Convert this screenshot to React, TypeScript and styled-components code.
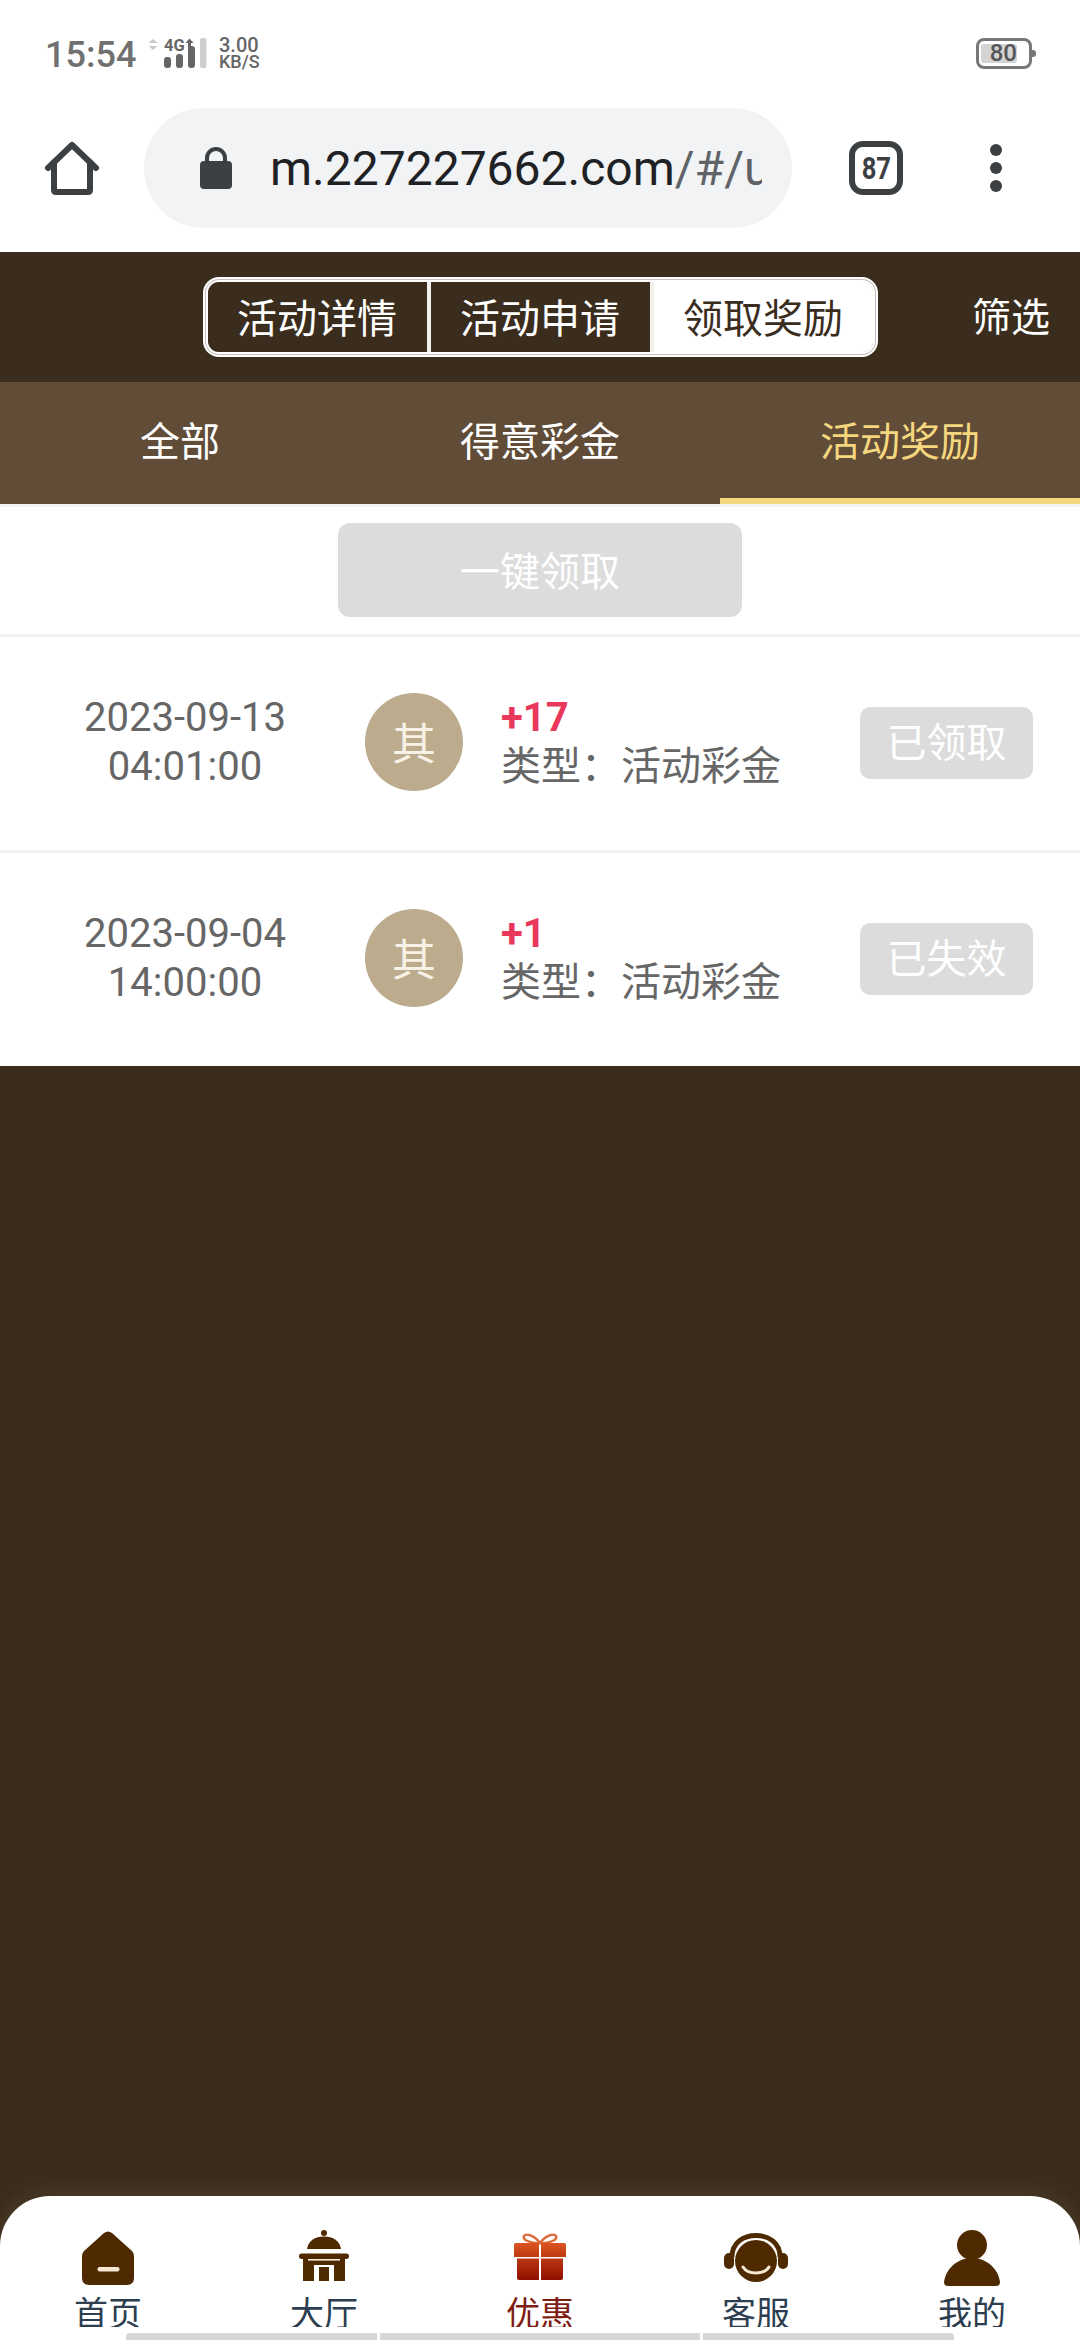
import styled, { createGlobalStyle } from "styled-components";

const GlobalStyle = createGlobalStyle`
  html, body {
    margin: 0;
    padding: 0;
    background: #3b2d1e;
  }
  * {
    box-sizing: border-box;
  }
`;

const records = [
  { date: "2023-09-13", time: "04:01:00", amount: "+17", status: "已领取" },
  { date: "2023-09-04", time: "14:00:00", amount: "+1", status: "已失效" },
];

function HomeIcon() {
  return (
    <svg width="56" height="56" viewBox="0 0 56 56">
      <path
        d="M4 28 L28 5 L52 28 M10 22 V50 Q10 52 12 52 H44 Q46 52 46 50 V22"
        fill="none"
        stroke="#3c4043"
        strokeWidth="6"
        strokeLinecap="round"
        strokeLinejoin="round"
      />
    </svg>
  );
}

function LockIcon() {
  return (
    <svg width="32" height="42" viewBox="0 0 32 42">
      <path
        d="M7 15 V11 A9 9 0 0 1 25 11 V15"
        fill="none"
        stroke="#3c4043"
        strokeWidth="4"
      />
      <rect x="0" y="14" width="32" height="28" rx="4" fill="#3c4043" />
    </svg>
  );
}

function SignalIcon() {
  return (
    <svg width="60" height="31" viewBox="0 0 60 31">
      <path d="M5 1 L9.5 5 H.5 Z M.5 8 H9.5 L5 12 Z" fill="#c9c9c9" />
      <text x="16" y="13" fontFamily="Roboto, sans-serif" fontWeight="700" fontSize="16.5" fill="#666">
        4G
      </text>
      <path d="M41.5 .5 L45.5 5 H43 V10 H40 V5 H37.5 Z" fill="#666" />
      <rect x="16" y="19" width="7" height="11" rx="3" fill="#666" />
      <rect x="28" y="16" width="7" height="14" rx="3" fill="#666" />
      <rect x="40" y="8" width="7" height="22" rx="3" fill="#666" />
      <rect x="52" y="0" width="6.5" height="30" rx="2" fill="#cfcfcf" />
    </svg>
  );
}

function NavHome() {
  return (
    <svg width="52" height="54" viewBox="0 0 52 54">
      <path
        d="M22 2 Q26 -1 30 2 L50 20 Q52 22 52 25 V47 Q52 54 45 54 H7 Q0 54 0 47 V25 Q0 22 2 20 Z"
        fill="#4f2a00"
      />
      <rect x="15.5" y="36" width="22" height="4.5" rx="2" fill="#f7e8d3" />
    </svg>
  );
}

function NavHall() {
  return (
    <svg width="50" height="58" viewBox="0 0 50 58">
      <circle cx="25" cy="4" r="3" fill="#4f2a00" />
      <path d="M8 20 C9 12 16 7.5 25 7.5 C34 7.5 41 12 42 20 Z" fill="#4f2a00" />
      <rect x="0" y="24.5" width="50" height="5.5" rx="2.7" fill="#4f2a00" />
      <path d="M4 28 H46 V52 H35 V36 H15 V52 H4 Z" fill="#4f2a00" />
      <rect x="9" y="30" width="32" height="1.6" fill="#f7e8d3" />
      <rect x="20" y="38" width="10" height="14" fill="#4f2a00" />
    </svg>
  );
}

function NavGift() {
  return (
    <svg width="52" height="51" viewBox="0 0 52 51">
      <defs>
        <linearGradient id="giftFill" x1="0" y1="0" x2="0" y2="1">
          <stop offset="0" stopColor="#dc5420" />
          <stop offset="1" stopColor="#8e0f00" />
        </linearGradient>
      </defs>
      <path
        d="M26 10 C20 2 12 0 10 3 C8 7 16 10 26 10 C36 10 44 7 42 3 C40 0 32 2 26 10 Z"
        fill="none"
        stroke="#da6a3c"
        strokeWidth="2.4"
      />
      <path
        d="M2 10 H25 V24 H0 V12 Q0 10 2 10 Z M27 10 H50 Q52 10 52 12 V24 H27 Z M3 25.5 H25 V47 H5 Q3 47 3 45 Z M27 25.5 H49 V45 Q49 47 47 47 H27 Z"
        fill="url(#giftFill)"
      />
    </svg>
  );
}

function NavService() {
  return (
    <svg width="64" height="50" viewBox="0 0 64 50">
      <circle cx="32" cy="28" r="21" fill="#4f2a00" />
      <path
        d="M8 24 C8 9 20 2.5 32 2.5 C44 2.5 56 9 56 24"
        fill="none"
        stroke="#4f2a00"
        strokeWidth="5"
      />
      <rect x="0" y="20" width="10" height="16" rx="5" fill="#4f2a00" />
      <rect x="54" y="20" width="10" height="16" rx="5" fill="#4f2a00" />
      <path
        d="M19 34 C24 42 40 42 45 34"
        fill="none"
        stroke="#f7e8d3"
        strokeWidth="3"
        strokeLinecap="round"
      />
    </svg>
  );
}

function NavUser() {
  return (
    <svg width="56" height="56" viewBox="0 0 56 56">
      <circle cx="28" cy="15" r="15" fill="#4f2a00" />
      <path
        d="M28 28 C42 28 54 38 56 52 Q56 56 52 56 H4 Q0 56 0 52 C2 38 14 28 28 28 Z"
        fill="#4f2a00"
      />
    </svg>
  );
}

const navItems = [
  { label: "首页", icon: <NavHome /> },
  { label: "大厅", icon: <NavHall /> },
  { label: "优惠", icon: <NavGift />, active: true },
  { label: "客服", icon: <NavService /> },
  { label: "我的", icon: <NavUser /> },
];

export default function App() {
  return (
    <>
      <GlobalStyle />
      <Page>
        <StatusBar>
          <StatusLeft>
            <Clock>15:54</Clock>
            <SignalIcon />
            <Speed>
              <span>3.00</span>
              <small>KB/S</small>
            </Speed>
          </StatusLeft>
          <Battery>
            <BatteryFill>80</BatteryFill>
          </Battery>
        </StatusBar>

        <Toolbar>
          <HomeIcon />
          <UrlPill>
            <LockIcon />
            <UrlText>
              m.227227662.com<span>/#/user</span>
            </UrlText>
          </UrlPill>
          <TabCount>
            <span>87</span>
          </TabCount>
          <MenuDots>
            <i />
            <i />
            <i />
          </MenuDots>
        </Toolbar>

        <Header>
          <SegmentOuter>
            <SegmentInner>
              <Segment>活动详情</Segment>
              <Segment>活动申请</Segment>
              <Segment $active>领取奖励</Segment>
            </SegmentInner>
          </SegmentOuter>
          <Filter>筛选</Filter>
        </Header>

        <SubTabs>
          <SubTab>全部</SubTab>
          <SubTab>得意彩金</SubTab>
          <SubTab $active>活动奖励</SubTab>
        </SubTabs>

        <ActionBar>
          <ClaimAll>一键领取</ClaimAll>
        </ActionBar>

        {records.map((r) => (
          <Row key={r.date}>
            <DateCol>
              <div>{r.date}</div>
              <div>{r.time}</div>
            </DateCol>
            <Avatar>其</Avatar>
            <Info>
              <Amount>{r.amount}</Amount>
              <TypeLine>类型：活动彩金</TypeLine>
            </Info>
            <StatusBadge>{r.status}</StatusBadge>
          </Row>
        ))}

        <Filler />

        <BottomNav>
          <NavRow>
            {navItems.map((item) => (
              <NavItem key={item.label}>
                <NavIcon>{item.icon}</NavIcon>
                <NavLabel $active={item.active}>{item.label}</NavLabel>
              </NavItem>
            ))}
          </NavRow>
          <ScrollStrip>
            <ScrollPiece $w={251} $first />
            <ScrollPiece $w={320} />
            <ScrollPiece $w={251} $last />
          </ScrollStrip>
        </BottomNav>
      </Page>
    </>
  );
}

const Page = styled.div`
  width: 1080px;
  height: 2340px;
  display: flex;
  flex-direction: column;
  overflow: hidden;
  background: #3b2d1e;
  font-family: Roboto, "Noto Sans CJK SC", sans-serif;
`;

const StatusBar = styled.div`
  height: 108px;
  padding: 0 45px;
  background: #fff;
  display: flex;
  align-items: flex-start;
  justify-content: space-between;
`;

const StatusLeft = styled.div`
  display: flex;
  align-items: flex-start;
  padding-top: 38px;
`;

const Clock = styled.span`
  width: 103px;
  margin-top: -3px;
  font-size: 36px;
  line-height: 40px;
  font-weight: 500;
  color: #707070;
`;

const Speed = styled.div`
  margin-left: 11px;
  margin-top: -1px;
  display: flex;
  flex-direction: column;
  color: #666;
  font-weight: 500;
  font-size: 20px;
  line-height: 17px;

  small {
    font-size: 18px;
    line-height: 16px;
  }
`;

const Battery = styled.div`
  position: relative;
  width: 56px;
  height: 31px;
  margin-top: 38px;
  margin-right: 3px;
  border: 3px solid #777;
  border-radius: 8px;
  padding: 3px 0 0 2px;

  &::after {
    content: "";
    position: absolute;
    right: -7px;
    top: 9px;
    width: 4px;
    height: 7px;
    background: #777;
    border-radius: 0 3px 3px 0;
  }
`;

const BatteryFill = styled.div`
  width: 36px;
  height: 19px;
  background: #d4d4d4;
  border-radius: 3px;
  color: #555;
  font-size: 24px;
  font-weight: 500;
  line-height: 19px;
  text-align: right;
`;

const Toolbar = styled.div`
  height: 144px;
  padding: 0 0 24px 44px;
  background: #fff;
  display: flex;
  align-items: center;
`;

const UrlPill = styled.div`
  width: 648px;
  height: 120px;
  margin-left: 44px;
  padding: 0 30px 0 56px;
  border-radius: 60px;
  background: #f1f3f4;
  display: flex;
  align-items: center;
`;

const UrlText = styled.div`
  margin-left: 38px;
  flex: 1;
  overflow: hidden;
  white-space: nowrap;
  font-size: 48px;
  color: #202124;

  span {
    color: #5f6368;
  }
`;

const TabCount = styled.div`
  width: 54px;
  height: 54px;
  margin-left: 57px;
  border: 6px solid #3c4043;
  border-radius: 14px;
  display: flex;
  align-items: center;
  justify-content: center;
  color: #3c4043;
  font-size: 32px;
  font-weight: 700;

  span {
    transform: scaleX(0.8);
  }
`;

const MenuDots = styled.div`
  margin-left: 87px;
  display: flex;
  flex-direction: column;
  gap: 6px;

  i {
    display: block;
    width: 12px;
    height: 12px;
    border-radius: 50%;
    background: #3c4043;
  }
`;

const Header = styled.div`
  height: 130px;
  background: #3b2d1e;
  display: grid;
  grid-template-columns: 1fr auto 1fr;
  align-items: center;
`;

const SegmentOuter = styled.div`
  grid-column: 2;
  width: 675px;
  height: 80px;
  padding: 1px;
  background: #c4bfb9;
  border: 2px solid #fff;
  border-radius: 16px;
`;

const SegmentInner = styled.div`
  height: 100%;
  display: flex;
  border: 2px solid #fff;
  border-radius: 13px;
  overflow: hidden;
`;

const Segment = styled.div<{ $active?: boolean }>`
  flex: 1;
  display: flex;
  align-items: center;
  justify-content: center;
  padding-bottom: 3px;
  font-size: 40px;
  background: ${(p) => (p.$active ? "#fff" : "#3b2d1e")};
  color: ${(p) => (p.$active ? "#3b2d1e" : "#fff")};
  border-right: ${(p) => (p.$active ? "none" : "4px solid #f2f0ed")};
`;

const Filter = styled.div`
  justify-self: end;
  margin-right: 30px;
  padding-bottom: 6px;
  font-size: 39px;
  color: #fff;
`;

const SubTabs = styled.div`
  height: 122px;
  background: #604c37;
  display: flex;
`;

const SubTab = styled.div<{ $active?: boolean }>`
  flex: 1;
  display: flex;
  align-items: center;
  justify-content: center;
  padding-bottom: 2px;
  font-size: 40px;
  color: ${(p) => (p.$active ? "#f5d77f" : "#fff")};
  border-bottom: 6px solid ${(p) => (p.$active ? "#f5d77f" : "transparent")};
`;

const ActionBar = styled.div`
  height: 130px;
  padding-top: 16px;
  background: #fff;
  border-top: 3px solid #f3f3f3;
  display: flex;
  justify-content: center;
`;

const ClaimAll = styled.div`
  width: 404px;
  height: 94px;
  padding-bottom: 2px;
  border-radius: 12px;
  background: #dcdcdc;
  color: #fff;
  font-size: 40px;
  display: flex;
  align-items: center;
  justify-content: center;
`;

const Row = styled.div`
  height: 216px;
  background: #fff;
  border-top: 3px solid #f3f3f3;
  display: flex;
  align-items: center;
  padding: 0 47px 3px 0;
`;

const DateCol = styled.div`
  width: 365px;
  padding-left: 5px;
  text-align: center;
  color: #666;
  font-size: 40px;
  line-height: 49px;
`;

const Avatar = styled.div`
  width: 98px;
  height: 98px;
  padding-bottom: 3px;
  border-radius: 50%;
  background: #bdab8d;
  color: #f7f1e6;
  font-size: 44px;
  display: flex;
  align-items: center;
  justify-content: center;
`;

const Info = styled.div`
  flex: 1;
  margin-left: 38px;
  display: flex;
  flex-direction: column;
`;

const Amount = styled.div`
  font-size: 40px;
  line-height: 48px;
  font-weight: 700;
  color: #e8395c;
`;

const TypeLine = styled.div`
  font-size: 40px;
  line-height: 49px;
  color: #666;
`;

const StatusBadge = styled.div`
  width: 173px;
  height: 72px;
  margin-top: 2px;
  padding-bottom: 6px;
  border-radius: 10px;
  background: #dcdcdc;
  color: #fff;
  font-size: 40px;
  display: flex;
  align-items: center;
  justify-content: center;
`;

const Filler = styled.div`
  flex: 1;
`;

const BottomNav = styled.div`
  height: 144px;
  background: #fff;
  border-radius: 50px 50px 0 0;
  box-shadow: 0 -6px 18px rgba(255, 220, 160, 0.07);
  display: flex;
  flex-direction: column;
  justify-content: space-between;
`;

const NavRow = styled.div`
  display: flex;
  padding-top: 32px;
`;

const NavItem = styled.div`
  flex: 1;
  display: flex;
  flex-direction: column;
  align-items: center;
`;

const NavIcon = styled.div`
  height: 60px;
  margin-bottom: 2px;
  display: flex;
  align-items: center;
  justify-content: center;
`;

const NavLabel = styled.div<{ $active?: boolean }>`
  height: 37px;
  overflow: hidden;
  font-size: 34px;
  line-height: 48px;
  color: ${(p) => (p.$active ? "#7f1d13" : "#2c3e50")};
`;

const ScrollStrip = styled.div`
  height: 7px;
  padding-left: 126px;
  display: flex;
  gap: 3px;
`;

const ScrollPiece = styled.div<{ $w: number; $first?: boolean; $last?: boolean }>`
  width: ${(p) => p.$w}px;
  background: #d6d6d6;
  border-radius: ${(p) =>
    p.$first ? "4px 0 0 0" : p.$last ? "0 4px 0 0" : "0"};
`;
